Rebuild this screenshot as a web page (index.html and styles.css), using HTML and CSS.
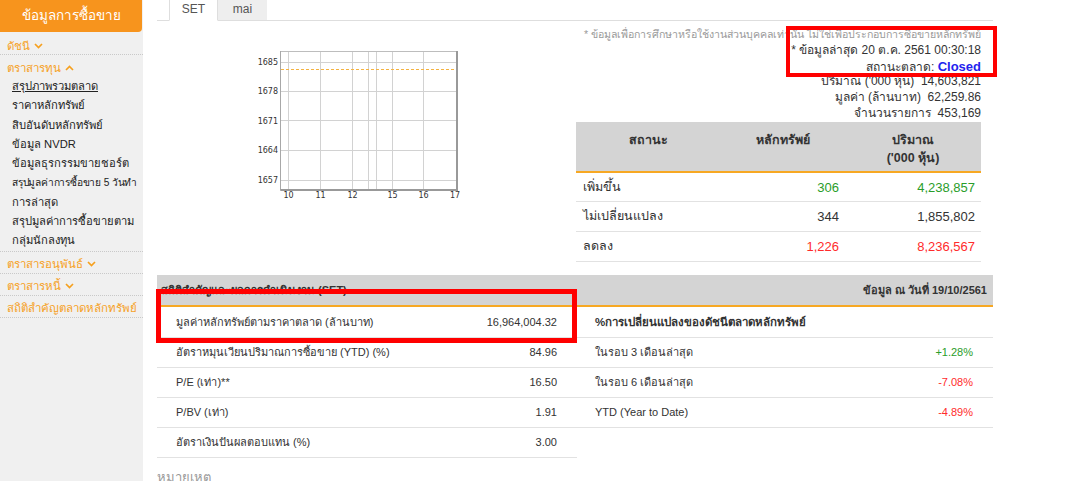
FILE: index.html
```html
<!DOCTYPE html>
<html lang="th">
<head>
<meta charset="utf-8">
<title>ข้อมูลการซื้อขาย</title>
<link rel="stylesheet" href="styles.css">
</head>
<body>
<div class="page">
  <aside class="sidebar">
    <div class="side-head">ข้อมูลการซื้อขาย</div>
    <div class="side-cat first">ดัชนี <svg class="chev" width="9" height="6" viewBox="0 0 9 6"><polyline points="1,1 4.5,4.5 8,1"/></svg></div>
    <div class="side-cat open">ตราสารทุน <svg class="chev" width="9" height="6" viewBox="0 0 9 6"><polyline points="1,5 4.5,1.5 8,5"/></svg></div>
    <ul class="side-sub">
      <li class="current">สรุปภาพรวมตลาด</li>
      <li>ราคาหลักทรัพย์</li>
      <li>สิบอันดับหลักทรัพย์</li>
      <li>ข้อมูล NVDR</li>
      <li>ข้อมูลธุรกรรมขายชอร์ต</li>
      <li><span class="tight">สรุปมูลค่าการซื้อขาย 5 วันทำ</span><br>การล่าสุด</li>
      <li>สรุปมูลค่าการซื้อขายตาม<br>กลุ่มนักลงทุน</li>
    </ul>
    <div class="side-cat">ตราสารอนุพันธ์ <svg class="chev" width="9" height="6" viewBox="0 0 9 6"><polyline points="1,1 4.5,4.5 8,1"/></svg></div>
    <div class="side-cat">ตราสารหนี้ <svg class="chev" width="9" height="6" viewBox="0 0 9 6"><polyline points="1,1 4.5,4.5 8,1"/></svg></div>
    <div class="side-cat">สถิติสำคัญตลาดหลักทรัพย์</div>
  </aside>

  <main class="main">
    <div class="tabs">
      <div class="tab active">SET</div>
      <div class="tab">mai</div>
    </div>

    <section class="overview">
      <div class="chart-col">
        <svg class="chart" width="222" height="154" viewBox="0 0 222 154">
          <g stroke="#d2d2d2" stroke-width="1">
            <line x1="41" y1="14.5" x2="216" y2="14.5"/>
            <line x1="41" y1="43.5" x2="216" y2="43.5"/>
            <line x1="41" y1="72.5" x2="216" y2="72.5"/>
            <line x1="41" y1="102.5" x2="216" y2="102.5"/>
            <line x1="41" y1="132.5" x2="216" y2="132.5"/>
            <line x1="48.5" y1="3" x2="48.5" y2="142"/>
            <line x1="80.5" y1="3" x2="80.5" y2="142"/>
            <line x1="112.5" y1="3" x2="112.5" y2="142"/>
            <line x1="128.5" y1="3" x2="128.5" y2="142"/>
            <line x1="136.5" y1="3" x2="136.5" y2="142"/>
            <line x1="152.5" y1="3" x2="152.5" y2="142"/>
            <line x1="183.5" y1="3" x2="183.5" y2="142"/>
          </g>
          <line x1="41" y1="21.5" x2="216" y2="21.5" stroke="#f5b342" stroke-width="1" stroke-dasharray="3 2"/>
          <polyline points="40.5,3.5 216.5,3.5" fill="none" stroke="#bdbdbd"/>
          <polyline points="40.5,3 40.5,142.5" fill="none" stroke="#a8a8a8"/>
          <polyline points="40.5,142 217,142 217,3" fill="none" stroke="#999" stroke-width="2"/>
          <g class="ylab" text-anchor="end">
            <text x="38" y="17">1685</text>
            <text x="38" y="46">1678</text>
            <text x="38" y="75.5">1671</text>
            <text x="38" y="105">1664</text>
            <text x="38" y="135">1657</text>
          </g>
          <g class="xlab" text-anchor="middle">
            <text x="48.5" y="149.5">10</text>
            <text x="80.5" y="149.5">11</text>
            <text x="112.5" y="149.5">12</text>
            <text x="152.5" y="149.5">15</text>
            <text x="183.5" y="149.5">16</text>
            <text x="215" y="149.5">17</text>
          </g>
        </svg>
      </div>

      <div class="info-col">
        <div class="info">
          <div class="note">* ข้อมูลเพื่อการศึกษาหรือใช้งานส่วนบุคคลเท่านั้น ไม่ใช่เพื่อประกอบการซื้อขายหลักทรัพย์</div>
          <div>* ข้อมูลล่าสุด 20 ต.ค. 2561 00:30:18</div>
          <div>สถานะตลาด: <b class="closed">Closed</b></div>
          <div>ปริมาณ ('000 หุ้น)&nbsp; 14,603,821</div>
          <div>มูลค่า (ล้านบาท)&nbsp; 62,259.86</div>
          <div>จำนวนรายการ&nbsp; 453,169</div>
        </div>
        <table class="breadth">
          <thead>
            <tr>
              <th class="c1">สถานะ</th>
              <th class="c2">หลักทรัพย์</th>
              <th class="c3">ปริมาณ<br>('000 หุ้น)</th>
            </tr>
          </thead>
          <tbody>
            <tr><td>เพิ่มขึ้น</td><td class="num up">306</td><td class="num up">4,238,857</td></tr>
            <tr><td>ไม่เปลี่ยนแปลง</td><td class="num">344</td><td class="num">1,855,802</td></tr>
            <tr><td>ลดลง</td><td class="num down">1,226</td><td class="num down">8,236,567</td></tr>
          </tbody>
        </table>
      </div>
    </section>

    <section class="stats">
      <div class="stats-head">
        <span class="stats-title">สถิติสำคัญและผลการดำเนินงาน (SET)</span>
        <span class="stats-date">ข้อมูล ณ วันที่ 19/10/2561</span>
      </div>
      <div class="stats-body">
        <table class="stats-left">
          <tr><td>มูลค่าหลักทรัพย์ตามราคาตลาด (ล้านบาท)</td><td class="num">16,964,004.32</td></tr>
          <tr><td>อัตราหมุนเวียนปริมาณการซื้อขาย (YTD) (%)</td><td class="num">84.96</td></tr>
          <tr><td>P/E (เท่า)**</td><td class="num">16.50</td></tr>
          <tr><td>P/BV (เท่า)</td><td class="num">1.91</td></tr>
          <tr><td>อัตราเงินปันผลตอบแทน (%)</td><td class="num">3.00</td></tr>
        </table>
        <table class="stats-right">
          <tr><td class="strong" colspan="2">%การเปลี่ยนแปลงของดัชนีตลาดหลักทรัพย์</td></tr>
          <tr><td>ในรอบ 3 เดือนล่าสุด</td><td class="num up">+1.28%</td></tr>
          <tr><td>ในรอบ 6 เดือนล่าสุด</td><td class="num down">-7.08%</td></tr>
          <tr><td>YTD (Year to Date)</td><td class="num down">-4.89%</td></tr>
        </table>
      </div>
      <div class="remark">หมายเหตุ</div>
    </section>
  </main>

  <div class="mark mark-status"></div>
  <div class="mark mark-cap"></div>
</div>
</body>
</html>
```

FILE: styles.css
```css
* { box-sizing: border-box; }

html, body {
  margin: 0;
  padding: 0;
  background: #fff;
}

body {
  font-family: "Liberation Sans", Arial, "Noto Sans", sans-serif;
  color: #333;
  font-size: 12px;
}

.page {
  position: relative;
  display: flex;
  align-items: stretch;
  width: 1074px;
  height: 481px;
  overflow: hidden;
}

/* ---------- sidebar ---------- */
.sidebar {
  flex: none;
  width: 143px;
  background: #f0f0f0;
  overflow: hidden;
}

.side-head {
  width: 142px;
  height: 32px;
  background: #f7941d;
  color: #fff;
  font-size: 13.5px;
  line-height: 32px;
  text-align: center;
  border-radius: 0 0 4px 0;
  white-space: nowrap;
}

.side-cat {
  display: flex;
  align-items: center;
  gap: 4px;
  height: 22px;
  padding: 4px 0 0 7px;
  line-height: 18px;
  font-size: 11.5px;
  color: #f6a01e;
  white-space: nowrap;
  border-bottom: 1px dotted #c9c9c9;
}

.side-cat.first { height: 23px; padding-top: 5px; }
.side-cat.open { border-bottom: none; }

.chev {
  flex: none;
  fill: none;
  stroke: #f6a01e;
  stroke-width: 1.7;
}

.side-sub {
  list-style: none;
  margin: 0;
  padding: 0 0 0 12px;
  border-bottom: 1px dotted #c9c9c9;
}

.side-sub li {
  font-size: 11.2px;
  line-height: 19.3px;
  color: #222;
  white-space: nowrap;
}

.side-sub .tight {
  display: inline-block;
  font-size: 10.2px;
  letter-spacing: -0.2px;
}

.side-sub li.current { text-decoration: underline; }

/* ---------- main ---------- */
.main {
  flex: none;
  width: 836px;
  margin-left: 14px;
}

.tabs {
  display: flex;
  align-items: flex-end;
  height: 21px;
  padding-left: 12px;
  border-bottom: 1px solid #dedede;
}

.tab {
  width: 49px;
  height: 21px;
  margin-bottom: -1px;
  line-height: 19px;
  text-align: center;
  font-size: 12px;
  color: #555;
  background: #eeeeee;
  border-bottom: 1px solid #dedede;
}

.tab.active {
  background: #fff;
  border-left: 1px solid #dedede;
  border-right: 1px solid #dedede;
  border-bottom: 1px solid #fff;
}

.overview {
  display: flex;
}

.chart-col {
  flex: none;
  width: 419px;
}

.chart {
  display: block;
  margin: 27px 0 0 83px;
}

.chart text {
  font-family: "DejaVu Sans", sans-serif;
  font-size: 8px;
  fill: #333;
}

.info-col {
  flex: none;
  width: 405px;
}

.info {
  padding-top: 6px;
  text-align: right;
  font-size: 12px;
  line-height: 15.8px;
  color: #333;
  white-space: nowrap;
}

.info > div {
  height: 15.8px;
}

.info .note {
  color: #9a9a9a;
  font-size: 10.6px;
}

.closed {
  color: #2323ee;
  font-size: 13px;
}

.breadth {
  width: 405px;
  border-collapse: collapse;
  font-size: 12.5px;
  table-layout: fixed;
}

.breadth th {
  background: #d4d4d4;
  border-bottom: 2px solid #f7a823;
  padding: 9px 6px 4px;
  height: 49px;
  line-height: 18px;
  vertical-align: top;
  font-weight: bold;
  color: #333;
  text-align: center;
}

.breadth .c1 { width: 144px; }
.breadth .c2 { width: 125px; }
.breadth .c3 { width: 136px; }

.breadth td {
  height: 30px;
  padding: 0 6px 0 7px;
  line-height: 17px;
  border-bottom: 1px solid #e2e2e2;
  color: #333;
}

.num { text-align: right; }

.breadth td.num { padding-right: 6px; font-size: 13px; }
.breadth td.up,
.stats td.up { color: #2a9d2a; }
.breadth td.down,
.stats td.down { color: #ff2b2b; }

/* ---------- stats ---------- */
.stats {
  margin-top: 13px;
}

.stats-head {
  display: flex;
  justify-content: space-between;
  align-items: center;
  height: 32px;
  padding: 0 6px 0 4px;
  background: #d4d4d4;
  border-bottom: 2px solid #f7a823;
  font-size: 11px;
  font-weight: bold;
  color: #333;
  white-space: nowrap;
}

.stats-body {
  display: flex;
  align-items: flex-start;
}

.stats-left,
.stats-right {
  border-collapse: collapse;
  font-size: 11px;
}

.stats-left { width: 420px; flex: none; }
.stats-right { width: 416px; flex: none; }

.stats-left td,
.stats-right td {
  height: 30px;
  padding: 0 20px 0 19px;
  line-height: 15px;
  border-bottom: 1px solid #e2e2e2;
  color: #333;
  white-space: nowrap;
}

.stats-right td { padding-left: 18px; }

.stats-right td.strong {
  font-weight: bold;
  font-size: 11.5px;
}

.remark {
  margin-top: 9px;
  font-size: 13px;
  color: #999;
}

/* ---------- red annotation boxes (overlay) ---------- */
.mark {
  position: absolute;
  border: 4px solid #ff0000;
  pointer-events: none;
}

.mark-status {
  left: 786px;
  top: 26px;
  width: 211px;
  height: 51px;
}

.mark-cap {
  left: 156px;
  top: 289px;
  width: 421px;
  height: 54px;
  border-width: 5px;
}
```
